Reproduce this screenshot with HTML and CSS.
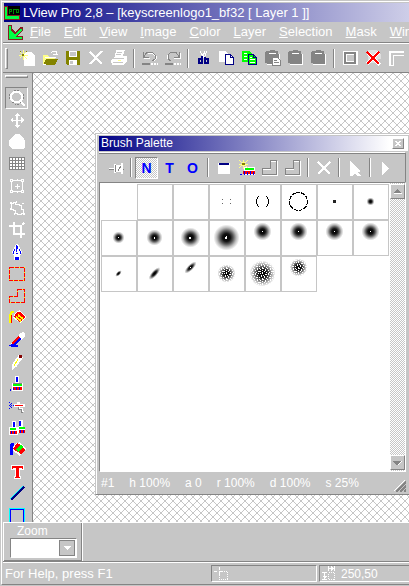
FILE: index.html
```
<!DOCTYPE html>
<html lang="en">
<head>
<meta charset="utf-8">
<title>LView Pro</title>
<link rel="stylesheet" href="styles.css">
</head>
<body>
<svg class="defs" aria-hidden="true">
  <defs>
    <radialGradient id="soft"><stop offset="0" stop-color="#000"/><stop offset=".3" stop-color="#111"/><stop offset=".5" stop-color="#555"/><stop offset=".75" stop-color="#bbb"/><stop offset="1" stop-color="#fff"/></radialGradient>
    <pattern id="spray" width="13" height="11" patternUnits="userSpaceOnUse"><path fill="#fff" d="M0 0h1v1H0zM3 0h2v1H3zM8 0h1v1H8zM11 0h1v2h-1zM1 1h1v1H1zM6 1h1v2H6zM9 2h1v1H9zM3 2h1v1H3zM0 3h2v1H0zM5 3h1v1H5zM12 3h1v1h-1zM3 4h1v2H3zM7 4h1v1H7zM10 4h1v1h-1zM1 5h1v1H1zM9 5h1v2H9zM12 5h1v1h-1zM6 6h2v1H6zM4 7h1v1H4zM2 7h1v2H2zM11 7h1v1h-1zM8 8h1v1H8zM5 8h1v2H5zM0 9h1v1H0zM10 9h2v1h-2zM3 10h1v1H3zM7 10h1v1H7z"/></pattern>
    <pattern id="hatch" width="8" height="8" patternUnits="userSpaceOnUse"><path fill="#c6c6c6" d="M0 0h1v1H0zM7 0h1v1H7zM1 1h1v1H1zM6 1h1v1H6zM2 2h1v1H2zM5 2h1v1H5zM3 3h2v2H3zM2 5h1v1H2zM5 5h1v1H5zM1 6h1v1H1zM6 6h1v1H6zM0 7h1v1H0zM7 7h1v1H7z"/></pattern>
    <symbol id="clip" viewBox="0 0 18 18"><path fill="#fff" d="M3 3h11v2h2v11H3v-2h2V5H3z"/><path fill="#848484" d="M2 2h4V1h5v1h3v3h1v10H3v-1H1V3h1z"/><path stroke="#fff" d="M5 4.500h7"/></symbol>
    <symbol id="step" viewBox="0 0 18 18"><path fill="none" stroke="#fff" d="M9.500 2.500h7v14h-15v-6h8z"/><path fill="none" stroke="#848484" d="M9.500 1.500h6v14h-14v-6h8z"/></symbol>
    <symbol id="brush" viewBox="0 0 18 18"><path fill="#fff" d="M7 1h4v7h4v8H4V8h3z"/><path fill="#00f" d="M8 2h2v5H8zM2 14h1v2H2z"/><path fill="#848484" d="M5 8h9v1H5z"/><path fill="#0f0" d="M5 9h9v2H5z"/><path fill="#f00" d="M5 12h9v3H5z"/><path fill="#00f" d="M5 13h1v2H5zM8 12h1v3H8zM11 12h1v3h-1z"/></symbol>
  </defs>
</svg>
<div class="app">
  <header class="title">
    <svg class="i16" viewBox="0 0 16 16"><path fill="#000" d="M3 1h13v13H3z"/><path fill="#842020" d="M0 1h4v9h12v5H0z"/><path fill="#0f4" d="M1 2h2v9h12v3H1z"/><path fill="none" stroke="#080" d="M5.500 9V4.500h2v2h-2M9.500 9V4.500h2M12.500 4.500h2v3h-2z"/></svg>
    <h1>LView Pro 2,8 – [keyscreenlogo1_bf32 [ Layer 1 ]]</h1>
  </header>
  <nav class="menu">
    <svg class="i16" viewBox="0 0 16 16"><path fill="#842020" d="M1 1h4v4l3 3 5-5h3v4l-6 5h6v4H1z"/><path fill="#0f4" d="M2 2h2v5l4 4 5-6h2v1l-5 6-2 1h7v2H2z"/></svg>
    <button><u>F</u>ile</button><button><u>E</u>dit</button><button><u>V</u>iew</button><button><u>I</u>mage</button><button><u>C</u>olor</button><button><u>L</u>ayer</button><button><u>S</u>election</button><button><u>M</u>ask</button><button><u>W</u>indow</button>
  </nav>
  <div class="bar main-bar">
    <span class="grip"></span>
    <button aria-label="New"><svg viewBox="0 0 18 18"><path fill="#fff" d="M7 3h6l4 4v10H6V8z"/><path stroke="#ffff84" d="M5.500 1v10M1 6.500h9M2 3l7 7M9 2l-7 7"/><path fill="#848400" d="M4 5h2v2H4zM2 2h1v1H2zM8 2h1v1H8z"/></svg></button>
    <button aria-label="Open"><svg viewBox="0 0 18 18"><path fill="#ff8" d="M2 6h5l1 2h6v3L4 15H2z"/><path fill="#848400" d="M5 10h12l-3 6H2z"/><path fill="none" stroke="#fff" d="M10 4l2-2h3v3m-3 0h5M4 8.500h11M2 15h3"/></svg></button>
    <button aria-label="Save"><svg viewBox="0 0 18 18"><path fill="#848400" d="M2 2h14v14H3l-1-1z"/><path fill="#fff" d="M5 2h8v6H5zM5 11h8v5H5z"/><path fill="#c6c6c6" d="M6 3h6v4H6zM6 12h3v3H6z"/></svg></button>
    <button aria-label="Delete"><svg viewBox="0 0 18 18"><path fill="none" stroke="#fff" stroke-width="2" d="M3 3l12 12M15 2L3 15"/></svg></button>
    <button aria-label="Print"><svg viewBox="0 0 18 18"><path fill="#fff" d="M6 1h9l-2 6h4v5l-4 4H2l-1-5 4-4z"/><path stroke="#c6c6c6" d="M7 3.500h5M6 5.500h5M3 9.500h11M3 13.500h10"/><path fill="#ff8" d="M8 11h3v1H8z"/></svg></button>
    <span class="sep"></span>
    <button aria-label="Undo"><svg viewBox="0 0 18 18"><path fill="none" stroke="#fff" d="M3 9.500h6M7 5l4-1 4 3v3l-2 2"/><path fill="none" stroke="#848484" d="M2.500 3v5.500H8M3 8l3-5h5l3 3v4l-3 2"/><path stroke="#848484" stroke-width="2" d="M1 15h8"/><path stroke="#fff" stroke-width="2" stroke-dasharray="2 1" d="M10 15h7"/></svg></button>
    <button aria-label="Redo"><svg viewBox="0 0 18 18"><path fill="none" stroke="#fff" d="M4 10L3 7l3-3m10.500 0v5.500H10"/><path fill="none" stroke="#848484" d="M15.500 3v5.500H10M15 8l-3-5H7L4 6v4l3 2"/><path stroke="#848484" stroke-width="2" d="M1 15h8"/><path stroke="#fff" stroke-width="2" stroke-dasharray="2 1" d="M10 15h7"/></svg></button>
    <span class="sep"></span>
    <button aria-label="Cut"><svg viewBox="0 0 18 18"><path stroke="#fff" d="M5 2l4 7M12 2l-3 7M10 2L8 7"/><path fill="none" stroke="#000084" stroke-width="2" d="M7 7v7H4v-4h3M10 8v6h3v-4h-3"/></svg></button>
    <button aria-label="Copy"><svg viewBox="0 0 18 18"><path fill="#fff" d="M1 2h7l2 3v8H1z"/><path fill="#fff" stroke="#000084" d="M7.500 5.500h5l3 3v7h-8z"/><path fill="none" stroke="#000084" d="M12.500 5v3.500H16"/></svg></button>
    <button aria-label="Copy merged"><svg viewBox="0 0 18 18"><path fill="#0f0" d="M1 2h7l3 3v8H1z"/><path stroke="#fff" d="M3 4.500h3M3 7.500h3M3 10.500h3"/><path fill="#0f0" stroke="#000084" d="M7.500 5.500h5l3 3v7h-8z"/><path fill="none" stroke="#000084" d="M12.500 5v3.500H16"/><path stroke="#fff" d="M9 8.500h2M9 10.500h5M9 13.500h5"/></svg></button>
    <button aria-label="Paste"><svg viewBox="0 0 18 18"><use href="#clip"/><path fill="#fff" stroke="#848484" d="M8.500 8.500h5l3 3v5h-8z"/><path stroke="#848484" d="M10 11.500h3M10 13.500h5"/></svg></button>
    <button aria-label="Paste as layer"><svg viewBox="0 0 18 18"><use href="#clip"/></svg></button>
    <button aria-label="Paste into"><svg viewBox="0 0 18 18"><use href="#clip"/></svg></button>
    <span class="sep"></span>
    <button aria-label="Select all"><svg viewBox="0 0 18 18"><path fill="none" stroke="#fff" stroke-width="4" d="M4 4h11v10H4z"/><path fill="none" stroke="#848484" stroke-width="2" d="M4 4h10v10H4z"/></svg></button>
    <button aria-label="Deselect"><svg viewBox="0 0 18 18"><path fill="#dedede" d="M4 1h9v4h4v5h-3v4H4z"/><path stroke="#fff" stroke-width="3" d="M4 4l12 12M15 3L3 15"/><path stroke="#f00" stroke-width="2" d="M3 3l12 12M15 3L3 15"/></svg></button>
    <button aria-label="Corner"><svg viewBox="0 0 18 18"><path fill="#fff" d="M2 2h15v5H7v10H2z"/><path fill="#c6c6c6" d="M4 4h13v2H6v10H4z"/></svg></button>
  </div>
  <main class="work">
    <aside class="tools">
      <span class="hgrip"></span>
      <button class="on" aria-label="Zoom"><svg viewBox="0 0 18 18"><path fill="none" stroke="#fff" stroke-width="2" d="M6 3h5l3 3v4l-3 3H6l-3-3V6zM12 12l5 5"/><path fill="none" stroke="#848484" stroke-dasharray="2 1" d="M6 1.500h5M1.500 5v5M4 13l3 2h4l2-2M15 5v5"/></svg></button>
      <button aria-label="Move"><svg viewBox="0 0 18 18"><path stroke="#fff" stroke-width="1" d="M9.500 3v13M3 9.500h13M8.500 3v13"/><path fill="#fff" d="M9 2l3 3H6zM9 17l3-3H6zM2 9l3-3v6zM16 9l-3-3v6z"/></svg></button>
      <button aria-label="Pan"><svg viewBox="0 0 18 18"><path fill="#fff" d="M8 1h3l5 4 1 3v7l-2 1H4l-3-3V7l3-2 1-2z"/></svg></button>
      <button aria-label="Grid"><svg viewBox="0 0 18 18"><path fill="#848484" d="M1 2h16v13H1z"/><path stroke="#fff" stroke-width="2" stroke-dasharray="2 1" d="M2 4h15M2 7h15M2 10h15M2 13h15"/></svg></button>
      <button aria-label="Transform"><svg viewBox="0 0 18 18"><path fill="none" stroke="#fff" d="M3.500 3.500h11v11h-11zM9.500 7v5M7 9.500h5M9.500 2v2M9.500 14v2"/><path fill="#fff" d="M2 2h3v3H2zM13 2h3v3h-3zM2 13h3v3H2zM13 13h3v3h-3z"/><path fill="#c6c6c6" d="M3 3h1v1H3zM14 3h1v1h-1zM3 14h1v1H3zM14 14h1v1h-1z"/></svg></button>
      <button aria-label="Warp"><svg viewBox="0 0 18 18"><path fill="none" stroke="#fff" d="M3.500 4.500h2v-1h2v2h4v1h2v4h2v4h-2v1h-4v-1h-2v-3h-2v-1h-2z"/><path fill="#fff" d="M2 3h2v2H2zM8 2h1v2H8zM14 4h2v1h-2zM2 9h2v2H2zM6 14h1v2H6zM15 14h2v2h-2z"/></svg></button>
      <button aria-label="Crop"><svg viewBox="0 0 18 18"><path fill="none" stroke="#fff" stroke-width="2" d="M6 1v12h11M1 5h12v12M14 4l2-2"/></svg></button>
      <button aria-label="Pen"><svg viewBox="0 0 18 18"><path fill="#fff" d="M8 1h2l4 8-2 4v4H6v-4L4 9z"/><path fill="#00f" d="M8 2h1v7H8zM9 3h1v3H9zM5 8h1v3H5zM12 8h1v3h-1zM6 6h1v2H6zM11 6h1v2h-1zM8 10h2v1H8zM7 14h4v3H7z"/></svg></button>
      <button aria-label="Rectangle selection"><svg viewBox="0 0 18 18"><path fill="none" stroke="#ff0" d="M1.500 2.500h15v13h-15z"/><path fill="none" stroke="#f00" stroke-dasharray="4 1" d="M1.500 2.500h15v13h-15z"/></svg></button>
      <button aria-label="Shape selection"><svg viewBox="0 0 18 18"><path fill="none" stroke="#ff0" d="M9.500 2.500h7v13h-15v-6h8z"/><path fill="none" stroke="#f00" stroke-dasharray="4 1" d="M9.500 2.500h7v13h-15v-6h8z"/></svg></button>
      <button aria-label="Wand"><svg viewBox="0 0 18 18"><path fill="#fff" d="M7 4l5-3 6 7-5 6-8-5z"/><path fill="#f00" d="M9 3l3 0 5 5-5 5-6-5z"/><path stroke="#ff0" stroke-width="2" d="M10 6l5 4M8 8l5 4"/><path fill="none" stroke="#ff0" stroke-width="2" d="M6 3H4L2 6v8"/><path stroke="#f00" d="M3.500 6v8"/></svg></button>
      <button aria-label="Color picker"><svg viewBox="0 0 18 18"><path fill="#fff" d="M12 2l3-1 2 2v3l-4 3-3-3z"/><path stroke="#fff" stroke-width="4" d="M12 6l-8 8"/><path stroke="#00f" stroke-width="3" d="M12 7l-8 8"/><path stroke="#f00" stroke-width="2" d="M11 6l-7 7"/><path fill="#00f" d="M1 14h9v2H3v-1H1z"/></svg></button>
      <button aria-label="Pencil"><svg viewBox="0 0 18 18"><path stroke="#fff" stroke-width="5" d="M13 3l-7 10"/><path fill="#fff" d="M4 11l4 3-4 3z"/><path stroke="#ff0" stroke-width="1" d="M10 6l-4 7"/><path fill="#840000" d="M11 2h3v3h-3z"/></svg></button>
      <button aria-label="Brush"><svg viewBox="0 0 18 18"><use href="#brush"/></svg></button>
      <button aria-label="Airbrush"><svg viewBox="0 0 18 18"><path fill="#00f" d="M1 5h1v1H1zM1 8h1v1H1zM1 11h1v1H1zM3 6h1v1H3zM3 8h1v1H3zM3 10h1v1H3zM5 8h1v1H5zM2 7h1v1H2zM2 9h1v1H2z"/><path fill="#fff" d="M6 7h11v3H6zM9 5h3v2H9z"/><path fill="#f00" d="M7 8h8v1H7z"/><path fill="none" stroke="#848484" d="M10.500 10v2.500h3v3H15"/><path fill="none" stroke="#fff" d="M11.500 10v1.500h3v3H16"/></svg></button>
      <button aria-label="Clone"><svg viewBox="0 0 18 18"><path fill="#fff" d="M4 2h4v6h3V1h4v7h2v6h-7v2H1V8h3z"/><path fill="#00f" d="M5 3h2v5H5zM11 2h2v5h-2z"/><path fill="#0f0" d="M2 9h6v2H2zM11 8h6v2h-6z"/><path fill="#f00" d="M2 12h7v3H2zM11 11h6v3h-6z"/><path fill="#00f" d="M3 12h1v3H3zM6 12h1v3H6zM12 11h1v3h-1zM15 11h1v3h-1z"/></svg></button>
      <button aria-label="Fill"><svg viewBox="0 0 18 18"><path fill="#fff" d="M7 3l5-2 6 7-6 7-8-6z"/><path fill="#f00" d="M9 2l2 1 6 6-4 4-8-5z"/><path stroke="#0f0" stroke-width="3" d="M14 5l-5 5"/><path fill="none" stroke="#00f" stroke-width="3" d="M6 3H4L3 6v8"/></svg></button>
      <button aria-label="Text"><svg viewBox="0 0 18 18"><path fill="#fff" d="M3 2h13v5h-4v6h1v3H6v-3h1V7H3z"/><path fill="#f00" d="M4 3h11v3h-1V5h-3v9h1v1H7v-1h1V5H5v1H4z"/></svg></button>
      <button aria-label="Line"><svg viewBox="0 0 18 18"><path stroke="#0ff" stroke-width="1" d="M2 14L15 1"/><path stroke="#000084" stroke-width="2" d="M3 15L16 2"/></svg></button>
      <button aria-label="Rectangle"><svg viewBox="0 0 18 18"><path fill="none" stroke="#0ff" d="M1.500 1.500h15v15h-15z"/><path fill="none" stroke="#00f" d="M2.500 2.500h13v13h-13z"/></svg></button>
    </aside>
    <section class="canvas">
      <svg class="hatch" aria-hidden="true"><rect width="100%" height="100%" fill="url(#hatch)"/></svg>
      <div class="palette">
        <header class="ptitle"><h2>Brush Palette</h2><button aria-label="Close"><svg viewBox="0 0 10 9"><path fill="#fff" d="M2 2h2v1h2V2h2v1H7v1H6v1h1v1h1v1H6V6H4v1H2V6h1V5h1V4H3V3H2z"/></svg></button></header>
        <div class="bar pbar">
          <button aria-label="Pin"><svg viewBox="0 0 18 18"><path stroke="#848484" d="M2 10.500h15"/><path fill="#fff" d="M2 9h5V5h2v1h5V4h2v11h-2v-2H9v1H7v-4H2z"/><path stroke="#848484" d="M8.500 6v7M11 12l3-5"/></svg></button>
          <span class="sep"></span>
          <button class="on letter">N</button><button class="letter">T</button><button class="letter">O</button>
          <span class="sep"></span>
          <button aria-label="Options"><svg viewBox="0 0 18 18"><path fill="#fff" d="M3 4h12v11H3z"/><path fill="#000084" d="M4 4h10v2H4z"/></svg></button>
          <button aria-label="New brush"><svg viewBox="0 0 18 18"><path fill="#fff" d="M6 8h11v8H6z"/><path fill="#0f0" d="M7 9h9v2H7z"/><path fill="#f00" d="M5 12h12v3H5z"/><path fill="#00f" d="M2 15h2v1H2zM6 12h1v4H6zM9 13h1v3H9zM12 12h1v4h-1zM15 13h1v3h-1z"/><path stroke="#ff8" stroke-width="1" d="M1 1l9 8M10 1L1 9M5.500 1v9M1 5.500h9"/><path fill="#848400" d="M4 4h3v2H4z"/></svg></button>
          <button aria-label="Load"><svg viewBox="0 0 18 18"><use href="#step"/></svg></button>
          <button aria-label="Store"><svg viewBox="0 0 18 18"><use href="#step"/></svg></button>
          <span class="sep"></span>
          <button aria-label="Remove"><svg viewBox="0 0 18 18"><path stroke="#848484" d="M4 3l11 12M15 4L4 15"/><path stroke="#fff" stroke-width="2" d="M3 3l12 12M15 3L3 15"/></svg></button>
          <span class="sep"></span>
          <button aria-label="Pointer"><svg viewBox="0 0 18 18"><path fill="#fff" d="M4 2l10 9v2h-2l3 4h-4l-2-3-2 3H4z"/></svg></button>
          <span class="sep"></span>
          <button aria-label="More"><svg viewBox="0 0 18 18"><path fill="#fff" d="M5 3l7 6-7 7z"/></svg></button>
        </div>
        <div class="list">
          <div class="cells">
            <button class="sel" aria-label="Brush 1"></button>
            <button aria-label="Brush 2"></button>
            <button aria-label="Brush 3"></button>
            <button aria-label="Brush 4"><svg viewBox="0 0 34 34"><path fill="#666" d="M12 14h1v1h-1zM20 14h1v1h-1zM12 18h1v1h-1zM20 18h1v1h-1z"/></svg></button>
            <button aria-label="Brush 5"><svg viewBox="0 0 34 34"><path fill="#000" d="M12 11h1v1h-1zM11 12h1v2h-1zM10 14h1v5h-1zM11 19h1v2h-1zM12 21h1v1h-1zM20 11h1v1h-1zM21 12h1v2h-1zM22 14h1v5h-1zM21 19h1v2h-1zM20 21h1v1h-1z"/></svg></button>
            <button aria-label="Brush 6"><svg viewBox="0 0 34 34"><circle cx="16.500" cy="16.500" r="9" fill="none" stroke="#000" stroke-dasharray="4 1"/></svg></button>
            <button aria-label="Brush 7"><svg viewBox="0 0 34 34"><circle cx="16.500" cy="16.500" r="1.500" fill="#222"/></svg></button>
            <button aria-label="Brush 8"><svg viewBox="0 0 34 34"><circle cx="16.500" cy="16.500" r="4" fill="url(#soft)"/></svg></button>
            <button aria-label="Brush 9"><svg viewBox="0 0 34 34"><circle cx="16.500" cy="16.500" r="6" fill="url(#soft)"/><path fill="#fff" d="M16 16h1v1h-1z"/></svg></button>
            <button aria-label="Brush 10"><svg viewBox="0 0 34 34"><circle cx="16.500" cy="16.500" r="8" fill="url(#soft)"/><path fill="#fff" d="M16 16h1v2h-1z"/></svg></button>
            <button aria-label="Brush 11"><svg viewBox="0 0 34 34"><circle cx="16.500" cy="16.500" r="10" fill="url(#soft)"/><path fill="#fff" d="M15 16h2v2h-2z"/></svg></button>
            <button aria-label="Brush 12"><svg viewBox="0 0 34 34"><circle cx="16.500" cy="16.500" r="13" fill="url(#soft)"/><path fill="#fff" d="M15 16h1v2h-1zM16 15h1v3h-1z"/></svg></button>
            <button aria-label="Brush 13"><svg viewBox="0 0 34 34"><circle cx="16.500" cy="10.500" r="9" fill="url(#soft)"/><path fill="#fff" d="M16 10h1v1h-1z"/></svg></button>
            <button aria-label="Brush 14"><svg viewBox="0 0 34 34"><circle cx="16.500" cy="10.500" r="9" fill="url(#soft)"/><path fill="#fff" d="M16 10h1v1h-1z"/></svg></button>
            <button aria-label="Brush 15"><svg viewBox="0 0 34 34"><circle cx="16.500" cy="10.500" r="9" fill="url(#soft)"/><path fill="#fff" d="M16 10h1v1h-1z"/></svg></button>
            <button aria-label="Brush 16"><svg viewBox="0 0 34 34"><circle cx="16.500" cy="10.500" r="9" fill="url(#soft)"/><path fill="#fff" d="M16 10h1v1h-1z"/></svg></button>
            <button aria-label="Brush 17"><svg viewBox="0 0 34 34"><ellipse cx="16.500" cy="16.500" rx="4" ry="2" transform="rotate(-45 16.500 16.500)" fill="url(#soft)"/></svg></button>
            <button aria-label="Brush 18"><svg viewBox="0 0 34 34"><ellipse cx="16.500" cy="16.500" rx="8" ry="3" transform="rotate(-48 16.500 16.500)" fill="url(#soft)"/></svg></button>
            <button aria-label="Brush 19"><svg viewBox="0 0 34 34"><ellipse cx="16.500" cy="10.500" rx="8" ry="3" transform="rotate(-45 16.500 10.500)" fill="url(#soft)"/><path fill="#fff" d="M16 10h1v1h-1z"/></svg></button>
            <button aria-label="Brush 20"><svg viewBox="0 0 34 34"><circle cx="16.500" cy="16.500" r="9" fill="url(#soft)"/><circle cx="16.500" cy="16.500" r="9" fill="url(#spray)"/></svg></button>
            <button aria-label="Brush 21"><svg viewBox="0 0 34 34"><circle cx="16.500" cy="16.500" r="13" fill="url(#soft)"/><circle cx="16.500" cy="16.500" r="13" fill="url(#spray)"/></svg></button>
            <button aria-label="Brush 22"><svg viewBox="0 0 34 34"><circle cx="16.500" cy="10.500" r="9" fill="url(#soft)"/><circle cx="16.500" cy="10.500" r="9" fill="url(#spray)"/></svg></button>
          </div>
          <div class="scroll">
            <button aria-label="Scroll up"><svg viewBox="0 0 9 6"><path fill="#848484" d="M4 0h1v1h1v1h1v1h1v1H1V3h1V2h1V1h1z"/><path fill="#fff" d="M1 4h8v1H1z"/></svg></button>
            <button aria-label="Scroll down"><svg viewBox="0 0 9 6"><path fill="#fff" d="M2 1h7v1H8v1H7v1H6v1H5V4z"/><path fill="#848484" d="M0 1h8v1H7v1H6v1H5v1H3V4H2V3H1V2H0z"/></svg></button>
          </div>
        </div>
        <footer class="pstatus"><span>#1</span><span>h 100%</span><span>a 0</span><span>r 100%</span><span>d 100%</span><span>s 25%</span>
          <svg class="size" viewBox="0 0 12 12"><path stroke="#fff" d="M0 11L11 0M4 11l7-7M8 11l3-3"/><path stroke="#848484" stroke-width="2" d="M2 12L12 2M6 12l6-6M10 12l2-2"/></svg>
        </footer>
      </div>
    </section>
  </main>
  <div class="dock">
    <div class="zoom">
      <label for="zoom">Zoom</label>
      <div class="combo"><select id="zoom"></select><span class="drop"><svg viewBox="0 0 8 4"><path fill="#fff" d="M0 0h8L4 4z"/></svg></span></div>
    </div>
  </div>
  <footer class="status">
    <span class="help">For Help, press F1</span>
    <span class="pane"><svg class="i16" viewBox="0 0 16 16"><path stroke="#fff" d="M0 5.500h3M5 5.500h4M5.500 1v3M5.500 6v3"/><path fill="none" stroke="#fff" stroke-dasharray="1 1" d="M5.500 5.500h8v8h-8z"/></svg></span>
    <span class="pane last"><svg class="i16" viewBox="0 0 16 16"><path fill="none" stroke="#fff" stroke-dasharray="1 1" d="M6.500 6.500h6v7h-6z"/><path stroke="#fff" d="M6.500 0v5M12.500 0v5M7 2.500h5M0 6.500h5M0 13.500h5M2.500 7v6"/><path fill="#fff" d="M9 0l3 2-3 3zM0 10h5l-2 3z"/></svg>250,50</span>
  </footer>
</div>
</body>
</html>
```
FILE: styles.css
```
:root {
  --face: #c6c6c6;
  --dark: #848484;
}
* { box-sizing: border-box; }
body {
  margin: 0;
  height: 100vh;
  overflow: hidden;
  background: var(--face);
  color: #fff;
  font: 12px/16px "Liberation Sans", sans-serif;
}
button {
  margin: 0;
  padding: 0;
  border: 0;
  background: none;
  color: inherit;
  font: inherit;
  flex: none;
}
svg { display: block; flex: none; shape-rendering: crispEdges; }
h1, h2 { margin: 0; font-weight: normal; white-space: nowrap; }
.defs { position: absolute; width: 0; height: 0; }
.i16 { width: 16px; height: 16px; }
.app {
  display: flex;
  flex-direction: column;
  height: calc(100vh - 1px);
  margin-left: 1px;
  border-top: 1px solid var(--face);
  box-shadow: inset 0 1px #fff;
  border-left: 1px solid #fff;
  border-bottom: 1px solid var(--dark);
  padding: 2px 0 0 1px;
  overflow: hidden;
}
.title {
  display: flex;
  align-items: center;
  gap: 3px;
  flex: none;
  height: 19px;
  margin-left: 1px;
  background: linear-gradient(90deg, #000084, #cecee8);
}
.title h1 { font-size: 13px; line-height: 19px; }
.menu {
  display: flex;
  align-items: center;
  gap: 13px;
  flex: none;
  height: 21px;
  padding-left: 4px;
  border-bottom: 1px solid var(--dark);
  font-size: 13px;
}
.menu .i16 { margin-right: -6px; }
.bar { display: flex; align-items: center; flex: none; }
.bar button { display: grid; place-items: center; width: 23px; height: 22px; }
.bar svg { width: 18px; height: 18px; }
.main-bar { height: 30px; border-top: 1px solid #fff; border-bottom: 1px solid var(--dark); }
.grip {
  flex: none;
  width: 3px;
  height: 21px;
  margin: 0 7px 0 2px;
  border: 1px solid #fff;
  border-right-color: var(--dark);
  border-bottom-color: var(--dark);
}
.sep {
  flex: none;
  width: 2px;
  height: 19px;
  margin: 0 3px;
  background: linear-gradient(90deg, var(--dark) 50%, #fff 50%);
}
.work { display: flex; flex: 1; min-height: 0; overflow: hidden; }
.tools {
  display: flex;
  flex-direction: column;
  align-items: center;
  flex: none;
  width: 30px;
  padding: 2px 2px 0 0;
  border-right: 1px solid var(--dark);
  overflow: hidden;
}
.hgrip {
  flex: none;
  width: 23px;
  height: 3px;
  margin-bottom: 9px;
  border: 1px solid #fff;
  border-right-color: var(--dark);
  border-bottom-color: var(--dark);
}
.tools button { display: grid; place-items: center; width: 23px; height: 22px; }
.tools svg { width: 18px; height: 18px; }
.on {
  border: 1px solid #fff;
  border-top-color: var(--dark);
  border-left-color: var(--dark);
}
.canvas { position: relative; flex: 1; background: #fff; overflow: hidden; }
.hatch { width: 100%; height: 100%; }
.palette {
  position: absolute;
  inset: 60px 0 27px 62px;
  display: flex;
  flex-direction: column;
  border: 1px solid var(--face);
  border-right: 0;
  border-bottom-color: var(--dark);
  padding: 2px 3px 0 3px;
  background: var(--face);
  box-shadow: inset 1px 1px #fff;
}
.ptitle {
  display: flex;
  align-items: center;
  justify-content: space-between;
  flex: none;
  height: 15px;
  margin-right: -2px;
  padding: 0 4px 0 2px;
  background: linear-gradient(90deg, #000084, #fff 94%);
}
.ptitle h2 { font-size: 12px; line-height: 15px; }
.ptitle button, .scroll button, .drop {
  display: grid;
  place-items: center;
  border: 1px solid #fff;
  border-right-color: var(--dark);
  border-bottom-color: var(--dark);
  background: var(--face);
}
.ptitle button { width: 12px; height: 11px; }
.ptitle svg { width: 10px; height: 9px; }
.pbar {
  height: 30px;
  margin-top: 1px;
  padding-left: 5px;
  border-top: 1px solid #fff;
  border-right: 1px solid var(--dark);
  box-shadow: inset 0 1px var(--dark);
}
.pbar .on { background: repeating-conic-gradient(#fff 0 25%, var(--face) 0 50%) 0 0 / 2px 2px; }
.letter { color: #00f; font: bold 14px/18px "Liberation Sans", sans-serif; }
.list {
  display: flex;
  flex: 1;
  min-height: 0;
  border: 1px solid #fff;
  border-top-color: var(--dark);
  border-left-color: var(--dark);
  background: #fff;
}
.cells {
  display: grid;
  grid-template-columns: repeat(8, 36px);
  grid-auto-rows: 36px;
  align-content: start;
  flex: 1;
  padding: 1px 0 0 1px;
}
.cells button { border: 1px solid var(--face); }
.cells .sel { border-color: #fff; }
.cells svg { width: 34px; height: 34px; }
.scroll {
  display: flex;
  flex-direction: column;
  justify-content: space-between;
  flex: none;
  width: 15px;
  padding: 1px 0;
  background: repeating-conic-gradient(#fff 0 25%, var(--face) 0 50%) 0 0 / 2px 2px;
}
.scroll button { width: 15px; height: 15px; }
.scroll svg { width: 9px; height: 6px; }
.pstatus {
  display: flex;
  align-items: center;
  gap: 15px;
  flex: none;
  height: 22px;
  padding-left: 2px;
  white-space: nowrap;
}
.size { width: 12px; height: 12px; margin: 6px 0 0 auto; }
.dock {
  display: flex;
  flex: none;
  height: 40px;
  border-top: 1px solid #fff;
  border-bottom: 1px solid var(--dark);
}
.zoom {
  width: 80px;
  padding: 2px 5px 0 6px;
  border-left: 1px solid #fff;
  border-right: 1px solid #fff;
  box-shadow: inset -1px 0 var(--dark), inset 0 -1px var(--dark);
}
.zoom label { display: block; padding-left: 7px; line-height: 13px; }
.combo {
  display: flex;
  align-items: center;
  height: 20px;
  padding-right: 1px;
  border: 1px solid #fff;
  border-top-color: var(--dark);
  border-left-color: var(--dark);
  background: #fff;
}
.combo select { flex: 1; min-width: 0; height: 16px; border: 0; background: #fff; appearance: none; }
.drop { width: 16px; height: 16px; outline: 1px solid var(--dark); outline-offset: -1px; pointer-events: none; }
.drop svg { width: 8px; height: 4px; }
.status {
  display: flex;
  align-items: center;
  flex: none;
  height: 22px;
  padding-left: 2px;
  border-top: 1px solid #fff;
}
.help { flex: 1; font-size: 13px; }
.pane {
  display: flex;
  align-items: center;
  gap: 3px;
  flex: none;
  width: 106px;
  height: 17px;
  margin-right: 2px;
  padding-left: 2px;
  border: 1px solid #fff;
  border-top-color: var(--dark);
  border-left-color: var(--dark);
}
.last { width: 90px; margin-right: 0; border-right: 0; }
```
